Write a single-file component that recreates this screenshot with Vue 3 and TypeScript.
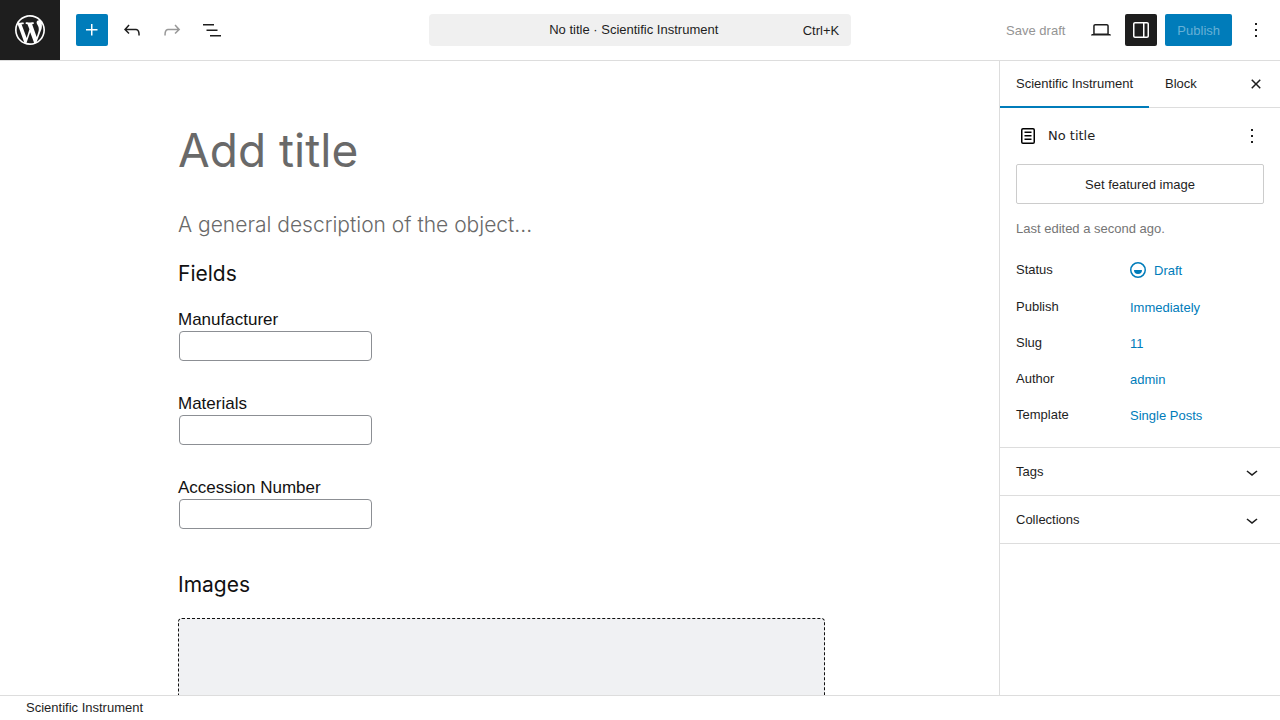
<script setup lang="ts">
import { ref } from 'vue'

interface Field { id: string; label: string; value: string }
interface Row { label: string; value: string; icon?: boolean }

const title = ref('')
const description = ref('')
const tab = ref<'post' | 'block'>('post')
const fields = ref<Field[]>([
  { id: 'manufacturer', label: 'Manufacturer', value: '' },
  { id: 'materials', label: 'Materials', value: '' },
  { id: 'accession', label: 'Accession Number', value: '' },
])
const rows: Row[] = [
  { label: 'Status', value: 'Draft', icon: true },
  { label: 'Publish', value: 'Immediately' },
  { label: 'Slug', value: '11' },
  { label: 'Author', value: 'admin' },
  { label: 'Template', value: 'Single Posts' },
]
const panels = ['Tags', 'Collections']
const more = 'M13 19h-2v-2h2v2zm0-6h-2v-2h2v2zm0-6h-2V5h2v2z'
</script>

<template>
  <div class="app">
    <header class="header">
      <div class="left">
        <a class="logo" href="#" aria-label="View posts">
          <svg viewBox="-2 -2 24 24" width="36" height="36"><path d="M20 10c0-5.51-4.49-10-10-10C4.48 0 0 4.49 0 10c0 5.52 4.48 10 10 10 5.51 0 10-4.48 10-10zM7.78 15.37L4.37 6.22c.55-.02 1.17-.08 1.17-.08.5-.06.44-1.13-.06-1.11 0 0-1.45.11-2.37.11-.18 0-.37 0-.58-.01C4.12 2.69 6.87 1.11 10 1.11c2.33 0 4.45.87 6.05 2.34-.68-.11-1.65.39-1.65 1.58 0 .74.45 1.36.9 2.1.35.61.55 1.36.55 2.46 0 1.49-1.4 5-1.4 5l-3.03-8.37c.54-.02.82-.17.82-.17.5-.05.44-1.25-.06-1.22 0 0-1.44.12-2.38.12-.87 0-2.33-.12-2.33-.12-.5-.03-.56 1.2-.06 1.22l.92.08 1.26 3.41zM17.41 10c.24-.64.74-1.87.43-4.25.7 1.29 1.05 2.71 1.05 4.25 0 3.29-1.73 6.24-4.4 7.78.97-2.59 1.94-5.2 2.92-7.78zM6.1 18.09C3.12 16.65 1.11 13.53 1.11 10c0-1.3.23-2.48.72-3.59C3.25 10.3 4.67 14.2 6.1 18.09zm4.03-6.63l2.58 6.98c-.86.29-1.76.45-2.71.45-.79 0-1.57-.11-2.29-.33.81-2.38 1.62-4.74 2.42-7.1z" /></svg>
        </a>
        <div class="tools">
          <button class="icon primary" type="button" aria-label="Toggle block inserter">
            <svg viewBox="0 0 24 24" width="24" height="24"><path d="M11 12.5V17.5H12.5V12.5H17.5V11H12.5V6H11V11H6V12.5H11Z" /></svg>
          </button>
          <button class="icon" type="button" aria-label="Undo">
            <svg viewBox="0 0 24 24" width="24" height="24"><path d="M18.3 11.7c-.6-.6-1.4-.9-2.3-.9H6.7l2.9-3.3-1.1-1-4.5 5L8.5 16l1-1-2.7-2.7H16c.5 0 .9.2 1.3.5 1 1 1 3.4 1 4.5v.3h1.5v-.2c0-1.5 0-4.3-1.5-5.7z" /></svg>
          </button>
          <button class="icon faded" type="button" aria-label="Redo" aria-disabled="true">
            <svg viewBox="0 0 24 24" width="24" height="24"><path d="M15.6 6.5l-1.1 1 2.9 3.3H8c-.9 0-1.7.3-2.3.9-1.4 1.5-1.4 4.2-1.4 5.6v.2h1.5v-.3c0-1.1 0-3.5 1-4.5.3-.3.7-.5 1.3-.5h9.2L14.5 15l1.1 1.1 4.6-4.6-4.6-5z" /></svg>
          </button>
          <button class="icon" type="button" aria-label="Document overview">
            <svg viewBox="0 0 24 24" width="24" height="24"><path d="M3 6h11v1.5H3V6Zm3.5 5.5h11V13h-11v-1.5ZM21 17H10v1.5h11V17Z" /></svg>
          </button>
        </div>
      </div>

      <button class="command" type="button">
        <span class="command-title">No title · Scientific Instrument</span>
        <span class="shortcut">Ctrl+K</span>
      </button>

      <div class="right">
        <button class="save" type="button" aria-disabled="true">Save draft</button>
        <button class="icon" type="button" aria-label="View">
          <svg viewBox="0 0 24 24" width="24" height="24"><path d="M20.5 16h-.7V8c0-1.1-.9-2-2-2H6.2c-1.1 0-2 .9-2 2v8h-.7c-.8 0-1.5.7-1.5 1.5h20c0-.8-.7-1.5-1.5-1.5zM5.7 8c0-.3.2-.5.5-.5h11.6c.3 0 .5.2.5.5v7.6H5.7V8z" /></svg>
        </button>
        <button class="icon pressed" type="button" aria-label="Settings" aria-pressed="true">
          <svg viewBox="0 0 24 24" width="24" height="24"><path fill-rule="evenodd" d="M18 4H6c-1.1 0-2 .9-2 2v12c0 1.1.9 2 2 2h12c1.1 0 2-.9 2-2V6c0-1.1-.9-2-2-2zm-4 14.5H6c-.3 0-.5-.2-.5-.5V6c0-.3.2-.5.5-.5h8v13zm4.5-.5c0 .3-.2.5-.5.5h-2.5v-13H18c.3 0 .5.2.5.5v12z" /></svg>
        </button>
        <button class="publish" type="button" aria-disabled="true">Publish</button>
        <button class="icon" type="button" aria-label="Options">
          <svg viewBox="0 0 24 24" width="24" height="24"><path :d="more" /></svg>
        </button>
      </div>
    </header>

    <div class="body">
      <main class="editor">
        <div class="content">
          <input v-model="title" class="title" type="text" placeholder="Add title" aria-label="Add title" />
          <input v-model="description" class="description" type="text" placeholder="A general description of the object..." aria-label="Description" />
          <h2>Fields</h2>
          <div class="fields">
            <div v-for="field in fields" :key="field.id" class="field">
              <label :for="field.id">{{ field.label }}</label>
              <input :id="field.id" v-model="field.value" type="text" />
            </div>
          </div>
          <h2>Images</h2>
          <div class="dropzone"></div>
        </div>
      </main>

      <aside class="sidebar">
        <div class="tabs">
          <button class="tab" :class="{ active: tab === 'post' }" type="button" @click="tab = 'post'">Scientific Instrument</button>
          <button class="tab" :class="{ active: tab === 'block' }" type="button" @click="tab = 'block'">Block</button>
          <button class="icon close" type="button" aria-label="Close Settings">
            <svg viewBox="0 0 24 24" width="24" height="24"><path d="M12 13.06l3.712 3.713 1.061-1.06L13.061 12l3.712-3.712-1.06-1.06L12 10.938 8.288 7.227l-1.061 1.06L10.939 12l-3.712 3.712 1.06 1.061L12 13.061z" /></svg>
          </button>
        </div>
        <section class="summary">
          <div class="card">
            <svg class="page-icon" viewBox="0 0 24 24" width="24" height="24"><path d="M15.5 7.5h-7V9h7V7.5Zm-7 3.5h7v1.5h-7V11Zm7 3.5h-7V16h7v-1.5Z" /><path d="M17 4H7a2 2 0 0 0-2 2v12a2 2 0 0 0 2 2h10a2 2 0 0 0 2-2V6a2 2 0 0 0-2-2ZM7 5.5h10a.5.5 0 0 1 .5.5v12a.5.5 0 0 1-.5.5H7a.5.5 0 0 1-.5-.5V6a.5.5 0 0 1 .5-.5Z" /></svg>
            <h3>No title</h3>
            <button class="icon small" type="button" aria-label="Actions">
              <svg viewBox="0 0 24 24" width="24" height="24"><path :d="more" /></svg>
            </button>
          </div>
          <button class="featured" type="button">Set featured image</button>
          <p class="edited">Last edited a second ago.</p>
          <div class="rows">
            <div v-for="row in rows" :key="row.label" class="row">
              <span class="row-label">{{ row.label }}</span>
              <button class="value" type="button">
                <svg v-if="row.icon" class="status" viewBox="0 0 24 24" width="24" height="24"><path fill-rule="evenodd" d="M12 18.5a6.5 6.5 0 1 1 0-13 6.5 6.5 0 0 1 0 13ZM4 12a8 8 0 1 1 16 0 8 8 0 0 1-16 0Zm8 4a4 4 0 0 0 4-4H8a4 4 0 0 0 4 4Z" /></svg>
                {{ row.value }}
              </button>
            </div>
          </div>
        </section>
        <button v-for="panel in panels" :key="panel" class="panel" type="button" aria-expanded="false">
          <span>{{ panel }}</span>
          <svg viewBox="0 0 24 24" width="24" height="24"><path d="M17.5 11.6L12 16l-5.5-4.4.9-1.2L12 14l4.5-3.6 1 1.2z" /></svg>
        </button>
      </aside>
    </div>

    <footer class="footer">Scientific Instrument</footer>
  </div>
</template>

<style>
body {
  margin: 0;
}
</style>

<style scoped>
.app,
.app * {
  box-sizing: border-box;
}
.app {
  display: flex;
  flex-direction: column;
  height: 100vh;
  background: #fff;
  color: #1e1e1e;
  font: 13px/20px "Liberation Sans", Arial, sans-serif;
}
button {
  display: flex;
  align-items: center;
  justify-content: center;
  padding: 0;
  border: 0;
  background: none;
  color: inherit;
  font: inherit;
  line-height: normal;
  white-space: nowrap;
}
svg {
  display: block;
  flex: none;
  fill: currentColor;
}
.header {
  display: grid;
  grid-template-columns: 1fr 33vw 1fr;
  align-items: center;
  flex: none;
  border-bottom: 1px solid #ddd;
}
.left,
.tools,
.right {
  display: flex;
  align-items: center;
}
.left {
  gap: 16px;
}
.logo {
  display: grid;
  place-items: center;
  width: 60px;
  height: 60px;
  background: #1e1e1e;
  color: #fff;
}
.tools,
.right {
  gap: 8px;
}
.icon {
  flex: none;
  width: 32px;
  height: 32px;
  border-radius: 2px;
}
.primary {
  background: #007cba;
  color: #fff;
}
.faded {
  opacity: 0.45;
}
.pressed {
  background: #1e1e1e;
  color: #fff;
}
.command {
  height: 32px;
  padding: 0 12px;
  border-radius: 4px;
  background: #f0f0f0;
}
.command-title {
  flex: 1;
  padding-left: 24px;
  line-height: 20px;
}
.right {
  justify-content: flex-end;
  padding-right: 8px;
}
.save {
  height: 32px;
  padding: 0 12px;
  color: #949494;
}
.publish {
  height: 32px;
  padding: 0 12px;
  border-radius: 2px;
  background: #007cba;
  color: #66b0d6;
}
.body {
  display: flex;
  flex: 1;
  min-height: 0;
}
.editor {
  flex: 1;
  min-width: 0;
  overflow: hidden;
  padding: 55px 0 0 4px;
}
.content {
  display: flex;
  flex-direction: column;
  max-width: 647px;
  margin: 0 auto;
  color: #111;
}
.title,
.description {
  width: 100%;
  padding: 0;
  border: 0;
  outline: 0;
  background: none;
  color: #111;
  font-family: Inter, "Liberation Sans", sans-serif;
}
.title {
  height: 68px;
  font-size: 46px;
  font-weight: 400;
}
.description {
  height: 32px;
  margin: 24px 0 1px;
  font-size: 21px;
  font-weight: 300;
}
.title::placeholder,
.description::placeholder {
  color: #696969;
  opacity: 1;
}
h2 {
  margin: 16px 0 0;
  font: 400 21px/34px Inter, "Liberation Sans", sans-serif;
}
.fields {
  display: flex;
  flex-direction: column;
  gap: 32px;
  margin: 18px 0 23px;
}
.field {
  display: flex;
  flex-direction: column;
  align-items: flex-start;
}
.field label {
  font-size: 17px;
  line-height: 22px;
}
.field input {
  width: 193px;
  height: 30px;
  margin: 0 1px;
  padding: 0 8px;
  border: 1px solid #8c8f94;
  border-radius: 4px;
  background: #fff;
}
.dropzone {
  height: 240px;
  margin-top: 16px;
  border: 1px dashed #111;
  border-radius: 4px;
  background: #f0f1f3;
}
.sidebar {
  flex: none;
  width: 281px;
  overflow: auto;
  border-left: 1px solid #ddd;
}
.tabs {
  display: flex;
  align-items: center;
  height: 47px;
  padding-right: 8px;
  border-bottom: 1px solid #ddd;
}
.tab {
  height: 47px;
  padding: 0 16px;
  line-height: 20px;
}
.active {
  box-shadow: inset 0 -2px #007cba;
}
.close {
  margin-left: auto;
}
.summary {
  padding: 16px;
  border-bottom: 1px solid #ddd;
}
.card {
  display: flex;
  align-items: center;
  gap: 8px;
  height: 24px;
}
.page-icon {
  color: #000;
}
h3 {
  flex: 1;
  margin: 0;
  font: 400 13px/20px "DejaVu Sans", sans-serif;
}
.small {
  width: 24px;
  height: 24px;
}
.featured {
  width: 100%;
  height: 40px;
  margin-top: 16px;
  border: 1px solid #ccc;
  border-radius: 2px;
}
.edited {
  margin: 15px 0 0;
  color: #757575;
}
.rows {
  display: flex;
  flex-direction: column;
  gap: 4px;
  margin-top: 15px;
}
.row {
  display: grid;
  grid-template-columns: 106px 1fr;
}
.row:first-child {
  padding-bottom: 1px;
}
.row-label {
  padding-top: 6px;
}
.value {
  justify-self: start;
  gap: 4px;
  height: 32px;
  padding: 0 8px;
  color: #007cba;
}
.status {
  margin-left: -4px;
}
.panel {
  justify-content: space-between;
  width: 100%;
  height: 48px;
  padding: 0 16px;
  border-bottom: 1px solid #ddd;
}
.footer {
  flex: none;
  padding: 2px 26px;
  border-top: 1px solid #ddd;
}
</style>
